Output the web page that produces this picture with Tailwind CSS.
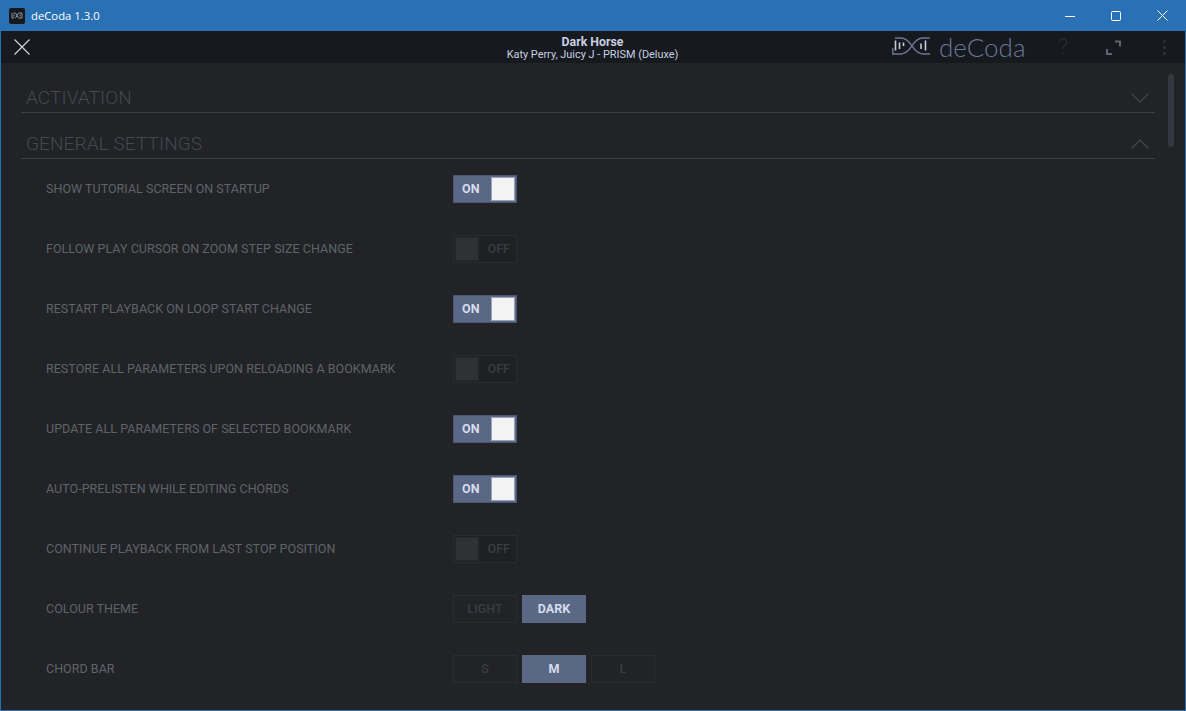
<!doctype html>
<html><head><meta charset="utf-8"><script src="https://cdn.jsdelivr.net/npm/@tailwindcss/browser@4"></script></head>
<body class="m-0 overflow-hidden bg-[#2a70b4] font-['Roboto',sans-serif]">
<div class="w-[1186px] h-[711px] flex flex-col overflow-hidden border-x border-b border-[#2a70b4]">
  <div class="h-[31px] shrink-0 -mx-px flex items-center bg-[#2a70b4] text-white">
    <div class="ml-[9px] w-4 h-4 rounded-[2px] bg-[#15181d] flex items-center justify-center">
      <svg width="12" height="7" viewBox="0 0 12 7" fill="none" stroke="#8f95a5" stroke-width="1"><path d="M1 1v5h2M2.500 1H4c2 0 2 5 4 5h3M4 6c2 0 2-5 4-5h3v5M3 2.500v2M9 2.500v2"/></svg>
    </div>
    <div class="ml-[6px] text-[11.3px] font-['Open_Sans',sans-serif] leading-none">deCoda 1.3.0</div>
    <div class="ml-auto mr-[1px] flex items-center">
      <div class="w-[46px] h-[31px] flex items-center justify-center"><svg width="10" height="10" viewBox="0 0 10 10" stroke="#fff" fill="none"><path d="M0 5.500h10"/></svg></div>
      <div class="w-[46px] h-[31px] flex items-center justify-center"><svg width="10" height="10" viewBox="0 0 10 10" stroke="#fff" fill="none"><rect x=".5" y=".5" width="9" height="9" rx="1"/></svg></div>
      <div class="w-[46px] h-[31px] flex items-center justify-center"><svg width="11" height="11" viewBox="0 0 11 11" stroke="#fff" fill="none"><path d="M.5.5l10 10M10.500.5l-10 10"/></svg></div>
    </div>
  </div>
  <div class="h-[32px] shrink-0 bg-[#16191e] flex items-center relative">
    <svg class="ml-[13px]" width="16" height="16" viewBox="0 0 16 16" stroke="#d5d9e2" stroke-width="1.1" fill="none"><path d="M.5.5l15 15M15.500.5l-15 15"/></svg>
    <div class="absolute left-0 right-0 top-0 h-full flex flex-col items-center justify-center text-center leading-none pr-[1px]">
      <div class="text-[12.3px] font-bold text-[#c9d0e2] leading-[14px] mt-[1px]">Dark Horse</div>
      <div class="text-[10.9px] text-[#c9d0e2] leading-[12px]">Katy Perry, Juicy J - PRISM (Deluxe)</div>
    </div>
    <div class="ml-auto flex items-center relative">
      <svg class="mt-[-1px] ml-[-1px]" width="39" height="19" viewBox="0 0 39 19" fill="none" stroke="#6a7796" stroke-width="1.4"><path d="M.8 11v6h8c6 0 9-5 11-8s5-8 11-8h7"/><path d="M3 1h6c6 0 9 5 11 8s5 8 11 8h7"/><g stroke="#c3cbdc" stroke-width="1.6"><path d="M3.500 3.500v10M7.500 5.500v6.500M11.500 5.500v3.500M29 6.500v5.500M33.500 3.500v10"/></g></svg>
      <div class="ml-[8px] w-[90px] text-[26px] leading-none font-['Lato',sans-serif] font-light text-[#6a7796]">deCoda</div>
      <div class="ml-[27px] w-[14px] text-[22px] font-light leading-none text-[#2a2d33] text-center">?</div>
      <div class="ml-[36px]"><svg width="15" height="15" viewBox="0 0 15 15" fill="none" stroke="#5d6471" stroke-width="2"><path d="M9 1.500h5v5M1 9v5h5"/></svg></div>
      <div class="ml-[42px] mr-[19px] flex flex-col gap-[3px]"><span class="block w-[3px] h-[3px] rounded-full bg-[#2f333a]"></span><span class="block w-[3px] h-[3px] rounded-full bg-[#2f333a]"></span><span class="block w-[3px] h-[3px] rounded-full bg-[#2f333a]"></span></div>
    </div>
  </div>
  <div class="flex-1 bg-[#212327] relative overflow-hidden pl-[20px] pr-[30px]">
    <div class="absolute right-[11px] top-[11px] w-[6px] h-[73px] rounded-[3px] bg-[#33373f]"></div>
    <div class="h-[50px] flex items-end justify-between border-b border-[#3c3f47] pl-[5px] pr-[6px]">
      <div class="text-[19px] font-light leading-[27px] mb-[1px] text-[#44484f] tracking-[0.1px]">ACTIVATION</div>
      <svg class="mb-[9px]" width="18" height="10" viewBox="0 0 18 10" fill="none" stroke="#3f444c" stroke-width="1.4"><path d="M.5.5L9 9l8.500-8.500"/></svg>
    </div>
    <div class="h-[46px] flex items-end justify-between border-b border-[#3c3f47] pl-[5px] pr-[6px]">
      <div class="text-[19px] font-light leading-[27px] mb-[1px] text-[#44484f] tracking-[0.1px]">GENERAL SETTINGS</div>
      <svg class="mb-[9px]" width="18" height="10" viewBox="0 0 18 10" fill="none" stroke="#3f444c" stroke-width="1.4"><path d="M.5 9.500L9 1l8.500 8.500"/></svg>
    </div>
    <div class="pl-[25px] flex flex-col text-[12.5px] tracking-[0.03px] text-[#5f6369]">
      <div class="h-[60px] flex items-center"><div class="w-[407px]">SHOW TUTORIAL SCREEN ON STARTUP</div>
        <div class="w-16 h-7 bg-[#5a6785] border border-[#4d5974] flex items-center justify-between pl-[8px] pr-[1px]"><span class="font-bold text-[#d5dcee]">ON</span><span class="w-6 h-6 bg-[#f3f3f3] border border-[#9aa3b7]"></span></div></div>
      <div class="h-[60px] flex items-center"><div class="w-[407px]">FOLLOW PLAY CURSOR ON ZOOM STEP SIZE CHANGE</div>
        <div class="w-16 h-7 border border-[#2a2c31] bg-[#1e2024] flex items-center justify-between pl-[1px] pr-[6px]"><span class="w-6 h-6 bg-[#2f3135] border border-[#26282c]"></span><span class="font-medium text-[#3a3d43]">OFF</span></div></div>
      <div class="h-[60px] flex items-center"><div class="w-[407px]">RESTART PLAYBACK ON LOOP START CHANGE</div>
        <div class="w-16 h-7 bg-[#5a6785] border border-[#4d5974] flex items-center justify-between pl-[8px] pr-[1px]"><span class="font-bold text-[#d5dcee]">ON</span><span class="w-6 h-6 bg-[#f3f3f3] border border-[#9aa3b7]"></span></div></div>
      <div class="h-[60px] flex items-center"><div class="w-[407px]">RESTORE ALL PARAMETERS UPON RELOADING A BOOKMARK</div>
        <div class="w-16 h-7 border border-[#2a2c31] bg-[#1e2024] flex items-center justify-between pl-[1px] pr-[6px]"><span class="w-6 h-6 bg-[#2f3135] border border-[#26282c]"></span><span class="font-medium text-[#3a3d43]">OFF</span></div></div>
      <div class="h-[60px] flex items-center"><div class="w-[407px]">UPDATE ALL PARAMETERS OF SELECTED BOOKMARK</div>
        <div class="w-16 h-7 bg-[#5a6785] border border-[#4d5974] flex items-center justify-between pl-[8px] pr-[1px]"><span class="font-bold text-[#d5dcee]">ON</span><span class="w-6 h-6 bg-[#f3f3f3] border border-[#9aa3b7]"></span></div></div>
      <div class="h-[60px] flex items-center"><div class="w-[407px]">AUTO-PRELISTEN WHILE EDITING CHORDS</div>
        <div class="w-16 h-7 bg-[#5a6785] border border-[#4d5974] flex items-center justify-between pl-[8px] pr-[1px]"><span class="font-bold text-[#d5dcee]">ON</span><span class="w-6 h-6 bg-[#f3f3f3] border border-[#9aa3b7]"></span></div></div>
      <div class="h-[60px] flex items-center"><div class="w-[407px]">CONTINUE PLAYBACK FROM LAST STOP POSITION</div>
        <div class="w-16 h-7 border border-[#2a2c31] bg-[#1e2024] flex items-center justify-between pl-[1px] pr-[6px]"><span class="w-6 h-6 bg-[#2f3135] border border-[#26282c]"></span><span class="font-medium text-[#3a3d43]">OFF</span></div></div>
      <div class="h-[60px] flex items-center"><div class="w-[407px]">COLOUR THEME</div>
        <div class="flex gap-[5px]"><div class="w-16 h-7 border border-[#2a2c31] flex items-center justify-center font-medium text-[#3a3d43]">LIGHT</div><div class="w-16 h-7 bg-[#5a6785] flex items-center justify-center font-bold text-[#d5dcee]">DARK</div></div></div>
      <div class="h-[60px] flex items-center"><div class="w-[407px]">CHORD BAR</div>
        <div class="flex gap-[5px]"><div class="w-16 h-7 border border-[#2a2c31] flex items-center justify-center font-medium text-[#3a3d43]">S</div><div class="w-16 h-7 bg-[#5a6785] flex items-center justify-center font-bold text-[#d5dcee]">M</div><div class="w-16 h-7 border border-[#2a2c31] flex items-center justify-center font-medium text-[#3a3d43]">L</div></div></div>
    </div>
  </div>
</div>
</body></html>
